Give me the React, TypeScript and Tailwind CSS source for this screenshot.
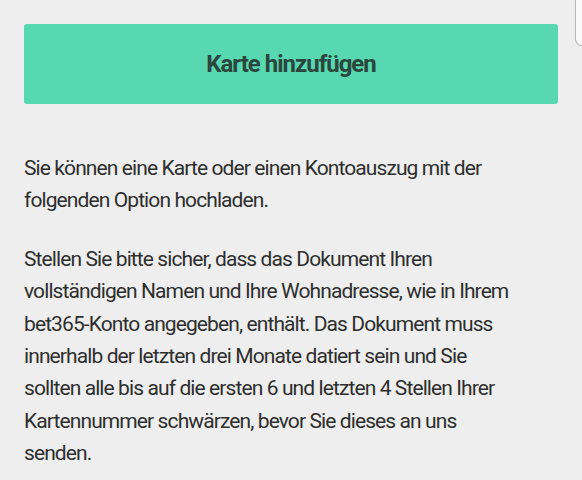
export default function App() {
  return (
    <div className="relative min-h-[480px] w-full overflow-hidden bg-[#edeeed] px-6 pt-6 font-['Roboto',sans-serif] text-[#2e2e2e]">
      {/* top-right edge overlay */}
      <div className="absolute right-0 top-0 h-[46px] w-[7px] rounded-bl-[12px] border-b border-l border-[#b5b5b5] bg-[#f9f9f9]" />

      <button className="flex h-[80px] w-full items-center justify-center rounded-[3px] bg-[#57d8b0] text-[24px] font-bold tracking-[-1px] text-[#2b463d]">
        Karte hinzufügen
      </button>

      <div className="mt-[48px] w-[490px] space-y-[26px] text-[21px] leading-[32.4px] tracking-[-0.9px]">
        <p>Sie können eine Karte oder einen Kontoauszug mit der folgenden Option hochladen.</p>
        <p>
          Stellen Sie bitte sicher, dass das Dokument Ihren vollständigen Namen und Ihre Wohnadresse, wie in Ihrem
          bet365-Konto angegeben, enthält. Das Dokument muss innerhalb der letzten drei Monate datiert sein und Sie
          sollten alle bis auf die ersten 6 und letzten 4 Stellen Ihrer Kartennummer schwärzen, bevor Sie dieses an uns
          senden.
        </p>
      </div>
    </div>
  );
}
